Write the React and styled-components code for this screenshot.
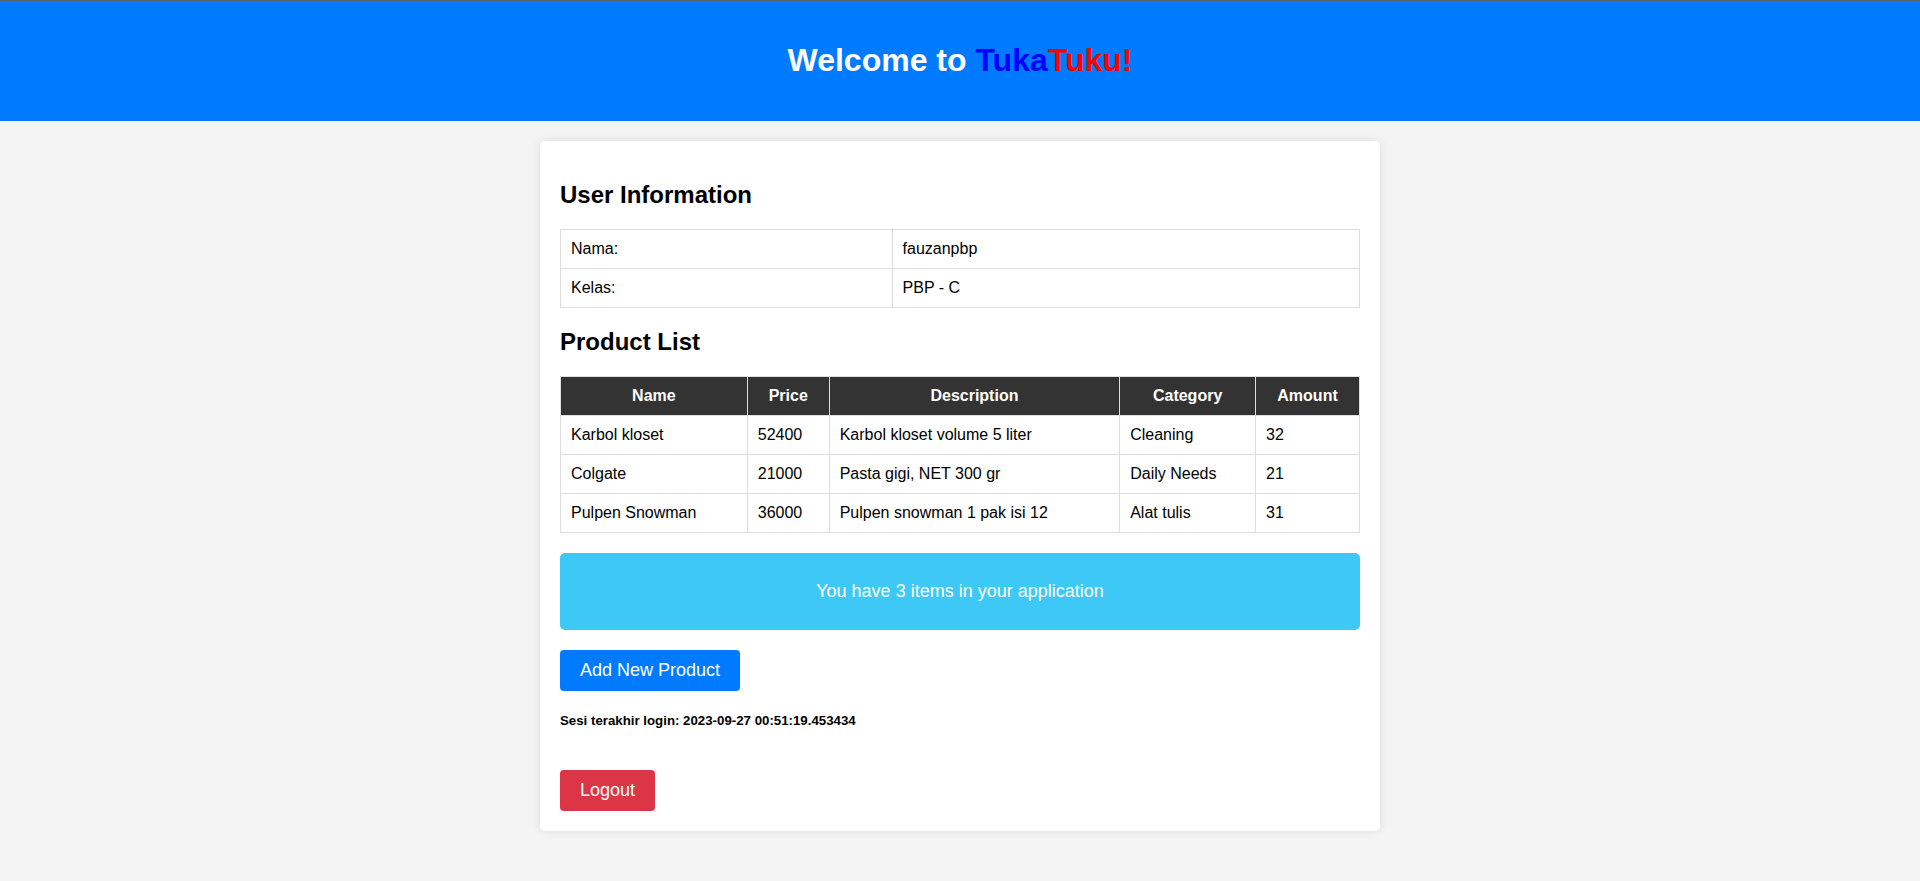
import React from 'react'
import styled, { createGlobalStyle } from 'styled-components'

const GlobalStyle = createGlobalStyle`
    body {
        margin: 0;
        background-color: #f4f4f4;
        font-family: "Liberation Sans", Arial, sans-serif;
        color: #000;
    }
`

const Header = styled.header`
    background-color: #007bff;
    border-top: 1px solid #5f6368;
    padding: 20px;
    text-align: center;
    color: white;
    h1 {
        margin: 21.44px 0;
        font-size: 32px;
    }
`

const Brand = styled.span`
    color: ${(props) => props.color};
`

const Card = styled.main`
    width: 800px;
    margin: 20px auto;
    padding: 20px;
    background-color: white;
    border-radius: 5px;
    box-shadow: 0 0 10px rgba(0, 0, 0, 0.1);
`

const Title = styled.h2`
    font-size: 24px;
    margin: 19.92px 0;
`

const Table = styled.table`
    width: 100%;
    border-collapse: collapse;
    font-size: 16px;
`

const Th = styled.th`
    background-color: #333;
    color: white;
    border: 1px solid #ddd;
    padding: 10px;
    text-align: center;
    font-weight: bold;
`

const Td = styled.td`
    border: 1px solid #ddd;
    padding: 10px;
    text-align: left;
`

const Alert = styled.div`
    margin-top: 20px;
    padding: 28px 20px;
    background-color: #3dc8f6;
    border-radius: 5px;
    color: white;
    text-align: center;
    font-size: 18px;
`

const Button = styled.button`
    display: inline-block;
    padding: 10px 20px;
    font-family: inherit;
    font-size: 18px;
    color: white;
    background-color: ${(props) => (props.$danger ? '#dc3545' : '#007bff')};
    border: none;
    border-radius: 4px;
    cursor: pointer;
`

const Actions = styled.div`
    margin-top: 20px;
`

const LastLogin = styled.h5`
    font-size: 13.28px;
    margin: 22px 0 0;
`

const LogoutRow = styled.div`
    margin-top: 42px;
`

const products = [
    { name: 'Karbol kloset', price: 52400, description: 'Karbol kloset volume 5 liter', category: 'Cleaning', amount: 32 },
    { name: 'Colgate', price: 21000, description: 'Pasta gigi, NET 300 gr', category: 'Daily Needs', amount: 21 },
    { name: 'Pulpen Snowman', price: 36000, description: 'Pulpen snowman 1 pak isi 12', category: 'Alat tulis', amount: 31 },
]

const columns = [
    { label: 'Name', width: 187 },
    { label: 'Price', width: 82 },
    { label: 'Description', width: 291 },
    { label: 'Category', width: 136 },
    { label: 'Amount', width: 104 },
]

const App = () => {
    return (
        <>
            <GlobalStyle />
            <Header>
                <h1>
                    Welcome to <Brand color="blue">Tuka</Brand><Brand color="red">Tuku!</Brand>
                </h1>
            </Header>
            <Card>
                <Title>User Information</Title>
                <Table>
                    <colgroup>
                        <col style={{ width: 332 }} />
                        <col style={{ width: 468 }} />
                    </colgroup>
                    <tbody>
                        <tr>
                            <Td>Nama:</Td>
                            <Td>fauzanpbp</Td>
                        </tr>
                        <tr>
                            <Td>Kelas:</Td>
                            <Td>PBP - C</Td>
                        </tr>
                    </tbody>
                </Table>

                <Title>Product List</Title>
                <Table>
                    <colgroup>
                        {columns.map((c) => <col key={c.label} style={{ width: c.width }} />)}
                    </colgroup>
                    <thead>
                        <tr>
                            {columns.map((c) => <Th key={c.label}>{c.label}</Th>)}
                        </tr>
                    </thead>
                    <tbody>
                        {products.map((p) => (
                            <tr key={p.name}>
                                <Td>{p.name}</Td>
                                <Td>{p.price}</Td>
                                <Td>{p.description}</Td>
                                <Td>{p.category}</Td>
                                <Td>{p.amount}</Td>
                            </tr>
                        ))}
                    </tbody>
                </Table>

                <Alert>You have {products.length} items in your application</Alert>

                <Actions>
                    <Button>Add New Product</Button>
                </Actions>

                <LastLogin>Sesi terakhir login: 2023-09-27 00:51:19.453434</LastLogin>

                <LogoutRow>
                    <Button $danger>Logout</Button>
                </LogoutRow>
            </Card>
        </>
    )
}

export default App
